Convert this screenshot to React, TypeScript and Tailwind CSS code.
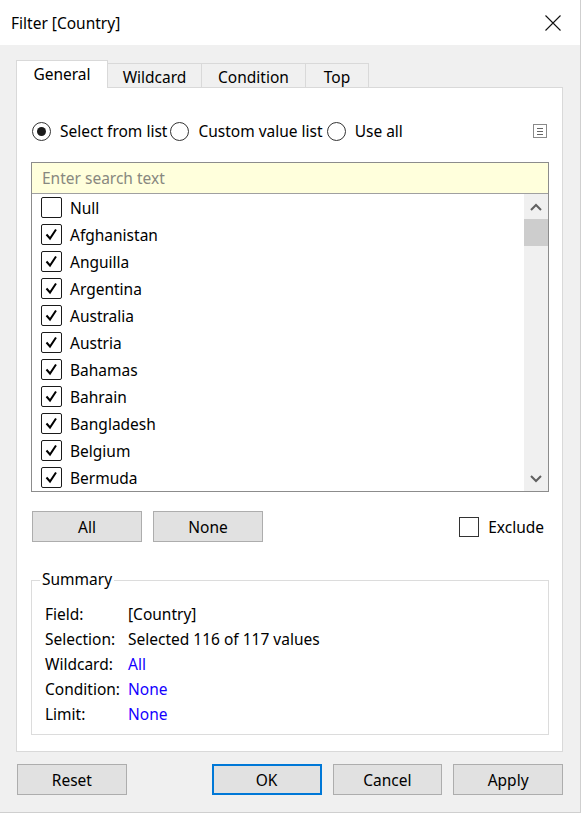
const countries = [
  { name: "Null", checked: false },
  { name: "Afghanistan", checked: true },
  { name: "Anguilla", checked: true },
  { name: "Argentina", checked: true },
  { name: "Australia", checked: true },
  { name: "Austria", checked: true },
  { name: "Bahamas", checked: true },
  { name: "Bahrain", checked: true },
  { name: "Bangladesh", checked: true },
  { name: "Belgium", checked: true },
  { name: "Bermuda", checked: true },
];

const summary = [
  { label: "Field:", value: "[Country]", blue: false },
  { label: "Selection:", value: "Selected 116 of 117 values", blue: false },
  { label: "Wildcard:", value: "All", blue: true },
  { label: "Condition:", value: "None", blue: true },
  { label: "Limit:", value: "None", blue: true },
];

function Checkbox({ checked }: { checked: boolean }) {
  return (
    <div className="w-[21px] h-[21px] border border-[#1a1a1a] rounded-[2px] bg-white flex items-center justify-center shrink-0">
      {checked && (
        <svg width="19" height="19" viewBox="0 0 19 19">
          <polyline points="4.5,9.5 8,13.5 14,4.5" fill="none" stroke="#000" strokeWidth="2" />
        </svg>
      )}
    </div>
  );
}

function Radio({ selected, label }: { selected: boolean; label: string }) {
  return (
    <div className="flex items-center">
      <div className="w-[19px] h-[19px] rounded-full border border-[#333] bg-white flex items-center justify-center shrink-0">
        {selected && <div className="w-[9px] h-[9px] rounded-full bg-[#1a1a1a]" />}
      </div>
      <span className="ml-[9px] pt-[2px]">{label}</span>
    </div>
  );
}

function Button({ label, primary, className = "" }: { label: string; primary?: boolean; className?: string }) {
  return (
    <button
      className={`w-[110px] h-[31px] bg-[#e1e1e1] flex items-center justify-center pt-[2px] text-black ${
        primary ? "border-2 border-[#0078d7]" : "border border-[#adadad]"
      } ${className}`}
    >
      {label}
    </button>
  );
}

function Chevron({ up }: { up: boolean }) {
  return (
    <svg width="12" height="8" viewBox="0 0 12 8">
      <polyline
        points={up ? "1,7 6,2 11,7" : "1,1 6,6 11,1"}
        fill="none"
        stroke="#606060"
        strokeWidth="2"
      />
    </svg>
  );
}

export default function App() {
  return (
    <div className="w-[584px] h-[816px] bg-white text-[15.5px] text-black font-['Segoe_UI','Noto_Sans',sans-serif] leading-none">
      <div className="w-[581px] h-[813px] flex flex-col bg-[#f0f0f0] border-r border-b border-[#cfcfcf]">
        {/* title bar */}
        <div className="h-[45px] bg-white flex items-center justify-between pl-[11px] pr-[19px] shrink-0">
          <span className="pt-[2px]">Filter [Country]</span>
          <svg width="16" height="16" viewBox="0 0 16 16">
            <path d="M0.5 0.5 L15.5 15.5 M15.5 0.5 L0.5 15.5" stroke="#111" strokeWidth="1.1" fill="none" />
          </svg>
        </div>

        <div className="flex flex-col pl-[16px] pr-[17px] pt-[16px]">
          {/* tabs */}
          <div className="flex items-end h-[27px] relative z-10 -mb-px">
            <div className="w-[92px] h-[28px] bg-white border border-b-0 border-[#d9d9d9] flex items-center justify-center">
              General
            </div>
            <div className="w-[94px] h-[25px] border-t border-r border-[#d9d9d9] flex items-center justify-center pt-[3px]">
              Wildcard
            </div>
            <div className="w-[104px] h-[25px] border-t border-r border-[#d9d9d9] flex items-center justify-center pt-[3px]">
              Condition
            </div>
            <div className="w-[63px] h-[25px] border-t border-r border-[#d9d9d9] flex items-center justify-center pt-[3px]">
              Top
            </div>
          </div>

          {/* panel */}
          <div className="h-[665px] bg-white border border-[#d9d9d9] flex flex-col pl-[14px] pr-[14px] pt-[33px]">
            <div className="flex items-center h-[20px] pl-[1px]">
              <Radio selected label="Select from list" />
              <div className="ml-[3px]">
                <Radio selected={false} label="Custom value list" />
              </div>
              <div className="ml-[4px]">
                <Radio selected={false} label="Use all" />
              </div>
              <div className="ml-auto mr-[1px] w-[14px] h-[14px] border border-[#8a8a8a] flex flex-col items-center justify-center gap-[2px]">
                <div className="w-[6px] h-px bg-[#666]" />
                <div className="w-[6px] h-px bg-[#666]" />
                <div className="w-[6px] h-px bg-[#666]" />
              </div>
            </div>

            {/* search + list */}
            <div className="mt-[21px] w-[518px] border border-[#8c8c8c] flex flex-col">
              <div className="h-[31px] bg-[#ffffdc] border-b border-[#a0a0a0] flex items-center pl-[10px] pt-[2px] text-[#888880]">
                Enter search text
              </div>
              <div className="flex h-[297px]">
                <div className="flex-1 flex flex-col">
                  {countries.map((c) => (
                    <div key={c.name} className="h-[27px] flex items-center pl-[9px]">
                      <Checkbox checked={c.checked} />
                      <span className="ml-[8px] pt-[2px]">{c.name}</span>
                    </div>
                  ))}
                </div>
                <div className="w-[24px] bg-[#f0f0f0] flex flex-col items-center">
                  <div className="h-[25px] flex items-center justify-center">
                    <Chevron up />
                  </div>
                  <div className="w-[24px] h-[27px] bg-[#cdcdcd]" />
                  <div className="flex-1" />
                  <div className="h-[25px] flex items-center justify-center">
                    <Chevron up={false} />
                  </div>
                </div>
              </div>
            </div>

            {/* all / none / exclude */}
            <div className="mt-[19px] flex items-center pl-[1px]">
              <Button label="All" />
              <Button label="None" className="ml-[11px]" />
              <div className="ml-auto flex items-center mr-[4px]">
                <div className="w-[20px] h-[20px] border border-[#333] bg-white" />
                <span className="ml-[9px] pt-[2px]">Exclude</span>
              </div>
            </div>

            {/* summary */}
            <div className="mt-[38px] w-[518px] h-[155px] border border-[#dcdcdc] relative flex flex-col pt-[26px] pl-[13px] gap-[9px]">
              <span className="absolute -top-[9px] left-[8px] bg-white px-[2px]">Summary</span>
              {summary.map((s) => (
                <div key={s.label} className="flex h-[16px] items-center">
                  <span className="w-[83px]">{s.label}</span>
                  <span className={s.blue ? "text-[#1500ff]" : ""}>{s.value}</span>
                </div>
              ))}
            </div>
          </div>

          {/* bottom buttons */}
          <div className="mt-[12px] flex items-center pl-[1px]">
            <Button label="Reset" />
            <Button label="OK" primary className="ml-[85px]" />
            <Button label="Cancel" className="ml-[11px]" />
            <Button label="Apply" className="ml-[11px]" />
          </div>
        </div>
      </div>
    </div>
  );
}
